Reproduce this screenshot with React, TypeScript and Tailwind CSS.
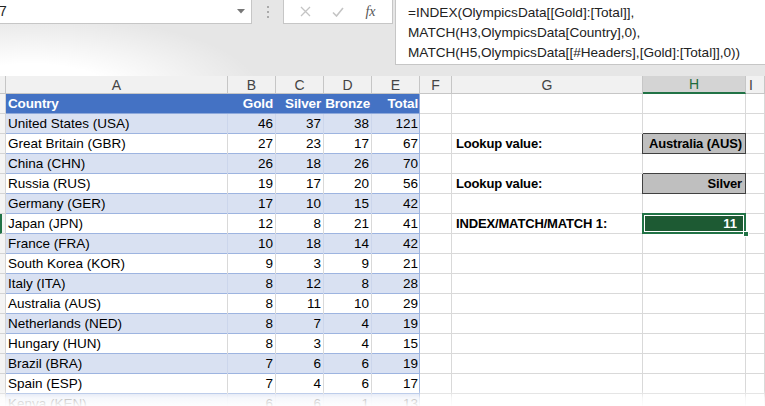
import type { ReactNode } from "react";

type Medal = [string, number, number, number, number];

const data: Medal[] = [
  ["United States (USA)", 46, 37, 38, 121],
  ["Great Britain (GBR)", 27, 23, 17, 67],
  ["China (CHN)", 26, 18, 26, 70],
  ["Russia (RUS)", 19, 17, 20, 56],
  ["Germany (GER)", 17, 10, 15, 42],
  ["Japan (JPN)", 12, 8, 21, 41],
  ["France (FRA)", 10, 18, 14, 42],
  ["South Korea (KOR)", 9, 3, 9, 21],
  ["Italy (ITA)", 8, 12, 8, 28],
  ["Australia (AUS)", 8, 11, 10, 29],
  ["Netherlands (NED)", 8, 7, 4, 19],
  ["Hungary (HUN)", 8, 3, 4, 15],
  ["Brazil (BRA)", 7, 6, 6, 19],
  ["Spain (ESP)", 7, 4, 6, 17],
  ["Kenya (KEN)", 6, 6, 1, 13],
];

const COLS = "grid grid-cols-[6px_222px_48px_48px_48px_48px_32px_191px_103px_1fr]";

function classNames(...xs: Array<string | false | undefined | null>) {
  return xs.filter(Boolean).join(" ");
}

// right-hand side cells keyed by sheet row number
const side: Record<number, { label: string; value: string; kind: "gray" | "selected" }> = {
  3: { label: "Lookup value:", value: "Australia (AUS)", kind: "gray" },
  5: { label: "Lookup value:", value: "Silver", kind: "gray" },
  7: { label: "INDEX/MATCH/MATCH 1:", value: "11", kind: "selected" },
};

function Grid({ className, children }: { className?: string; children?: ReactNode }) {
  return (
    <div className={classNames("h-5 border-r border-b border-[#d9d9d9] flex items-center leading-none", className)}>
      {children}
    </div>
  );
}

function SideCells({ row }: { row: number }) {
  const s = side[row];
  return (
    <>
      <Grid />
      <Grid className="pl-[4px] text-[13px] font-bold tracking-[-0.15px] text-black">{s ? s.label : null}</Grid>
      {s && s.kind === "gray" ? (
        <div className="h-5 border-r border-b border-[#404040] bg-[#bfbfbf] shadow-[0_-1px_0_#404040,-1px_0_0_#404040] flex items-center justify-end pr-[3px] text-[13px] font-bold tracking-[-0.15px] text-black">
          {s.value}
        </div>
      ) : s && s.kind === "selected" ? (
        <div className="relative h-5 border-r border-b border-[#d9d9d9] bg-[#1d5a33] flex items-center justify-end pr-[8px] text-[13px] font-bold text-white">
          {s.value}
          <div className="absolute -inset-px border-2 border-[#217346] shadow-[inset_0_0_0_1px_#ffffff]" />
          <div className="absolute -right-[4px] -bottom-[4px] h-[6px] w-[6px] bg-[#217346] border border-white" />
        </div>
      ) : (
        <Grid />
      )}
      <Grid />
    </>
  );
}

function RowHead({ selected }: { selected?: boolean }) {
  return (
    <div
      className={classNames(
        "h-5 border-r border-b border-[#d4d4d4] bg-[#f4f4f4]",
        selected && "border-l-2 border-l-[#217346]"
      )}
    />
  );
}

export default function App() {
  return (
    <div className="relative h-[406px] w-[765px] overflow-hidden bg-white font-['Liberation_Sans',Arial,sans-serif] text-[13.5px] text-black">
      {/* formula bar */}
      <div className="flex h-[76px] items-start bg-[#e6e6e6] bg-[radial-gradient(ellipse_230px_75px_at_30px_90px,#ffffff_0%,#ffffff_35%,rgba(255,255,255,0)_100%)]">
        <div className="flex h-[24px] w-[395px] items-stretch">
          <div className="flex w-[252px] items-center justify-between border-r border-b border-[#c6c6c6] bg-white pr-[6px] text-[14px] text-[#222]">
            <span className="-ml-px">7</span>
            <svg width="8" height="5" viewBox="0 0 8 5" aria-hidden="true">
              <path d="M0 0h8L4 4.5z" fill="#777" />
            </svg>
          </div>
          <div className="flex w-[31px] flex-col items-center justify-center gap-[3px]">
            <span className="h-[2px] w-[2px] bg-[#aaa]" />
            <span className="h-[2px] w-[2px] bg-[#aaa]" />
            <span className="h-[2px] w-[2px] bg-[#aaa]" />
          </div>
          <div className="flex w-[110px] items-center justify-around border-r border-b border-l border-[#c6c6c6] bg-white px-[6px]">
            <svg width="11" height="11" viewBox="0 0 11 11" aria-hidden="true">
              <path d="M1 1l9 9M10 1l-9 9" stroke="#c4c4c4" strokeWidth="1.3" />
            </svg>
            <svg width="12" height="10" viewBox="0 0 12 10" aria-hidden="true">
              <path d="M1 5.5l3.5 3.5L11 1" stroke="#c4c4c4" strokeWidth="1.6" fill="none" />
            </svg>
            <span className="font-['Liberation_Serif',serif] text-[14px] italic text-[#555]">fx</span>
          </div>
        </div>
        <div className="h-[65px] flex-1 border-l border-b border-[#c6c6c6] bg-white pt-[3px] pl-[12px] text-[13.6px] leading-[20px] text-[#222]">
          <div>=INDEX(OlympicsData[[Gold]:[Total]],</div>
          <div>MATCH(H3,OlympicsData[Country],0),</div>
          <div>MATCH(H5,OlympicsData[[#Headers],[Gold]:[Total]],0))</div>
        </div>
      </div>

      {/* column headers */}
      <div className={classNames(COLS, "h-[18px] text-[14px] text-[#444]")}>
        {["", "A", "B", "C", "D", "E", "F", "G", "H", "I"].map((c) => (
          <div
            key={c || "corner"}
            className={classNames(
              "flex items-center justify-center border-r border-b border-[#c6c6c6] leading-none",
              c === "H" ? "border-b-2 border-b-[#217346] bg-[#d4d4d4] text-[#1d6b3d]" : "bg-[#f1f1f1]",
              c === "I" && "justify-start pl-[3px]"
            )}
          >
            {c}
          </div>
        ))}
      </div>

      {/* header row */}
      <div className={COLS}>
        <RowHead />
        <div className="col-span-5 grid h-5 grid-cols-[222px_48px_48px_48px_48px] border-b border-r border-[#8ea9db] bg-[#4472c4] font-bold tracking-[-0.15px] text-white">
          <div className="flex items-center pl-[2px]">Country</div>
          <div className="flex items-center justify-end pr-[3px]">Gold</div>
          <div className="flex items-center justify-end pr-[3px]">Silver</div>
          <div className="flex items-center justify-end pr-[2px]">Bronze</div>
          <div className="flex items-center justify-end pr-[2px]">Total</div>
        </div>
        <SideCells row={1} />
      </div>

      {data.map((d, i) => {
        const row = i + 2;
        const band = i % 2 === 0;
        return (
          <div key={d[0]} className={COLS}>
            <RowHead selected={row === 7} />
            <div
              className={classNames(
                "col-span-5 grid h-5 grid-cols-[222px_48px_48px_48px_48px] border-b border-r border-[#9db4e0]",
                band ? "bg-[#d9e1f2]" : "bg-white"
              )}
            >
              <div className={classNames("flex items-center pl-[2px] border-r", band ? "border-[#ccd6ec]" : "border-[#d9d9d9]")}>
                {d[0]}
              </div>
              {d.slice(1).map((n, j) => (
                <div
                  key={j}
                  className={classNames(
                    "flex items-center justify-end pr-[2px]",
                    j < 3 && "border-r",
                    band ? "border-[#ccd6ec]" : "border-[#d9d9d9]"
                  )}
                >
                  {n}
                </div>
              ))}
            </div>
            <SideCells row={row} />
          </div>
        );
      })}

      {/* screenshot fade at the bottom edge */}
      <div className="pointer-events-none absolute right-0 bottom-0 left-0 h-[16px] bg-gradient-to-b from-white/0 via-white/75 to-white/95" />
    </div>
  );
}
